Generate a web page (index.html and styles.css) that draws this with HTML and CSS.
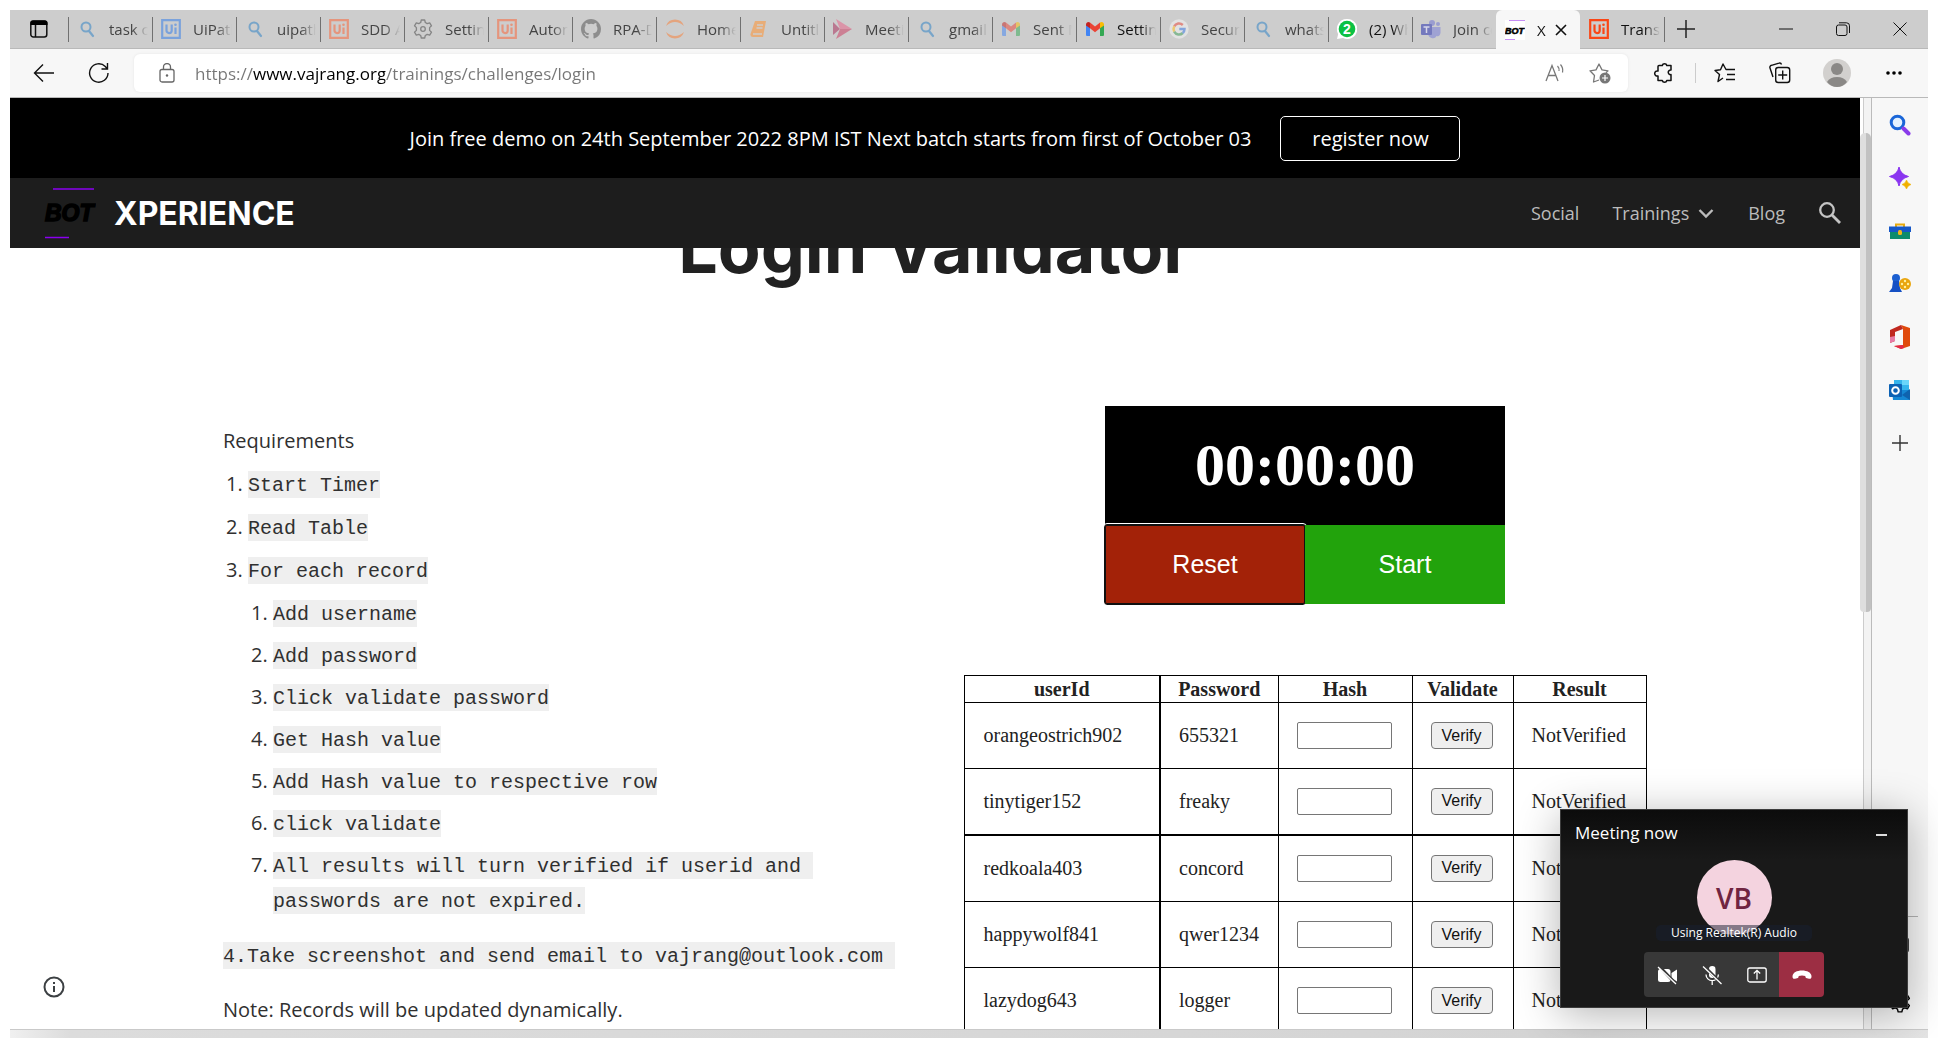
FILE: index.html
```html
<!DOCTYPE html>
<html lang="en">
<head>
<meta charset="utf-8">
<meta name="viewport" content="width=device-width, initial-scale=1">
<title>Xperience - Login Validator</title>
<link rel="stylesheet" href="styles.css">
</head>
<body>
<svg class="defs" aria-hidden="true">
  <symbol id="find" viewBox="0 0 20 20"><circle cx="9" cy="8" r="4.500" fill="none" stroke="currentColor" stroke-width="2"/><path d="M12 12l4 5" stroke="currentColor" stroke-width="2.200" stroke-linecap="round"/></symbol>
  <symbol id="uipath" viewBox="0 0 20 20"><path d="M1.200 1.200h17.600v17.600H1.200z" fill="none" stroke="currentColor" stroke-width="2.200"/><path d="M5.500 5.500v6a2.600 2.600 0 0 0 5.200 0v-6M14.500 8.500V15" fill="none" stroke="currentColor" stroke-width="2.200"/><circle cx="14.500" cy="5.800" r="1.300" fill="currentColor"/></symbol>
  <symbol id="gear" viewBox="0 0 20 20"><path d="M8.300 1h3.400l.6 2.500 1.900 1.100 2.500-.8 1.800 3-1.900 1.800v2.800l1.900 1.800-1.800 3-2.500-.8-1.900 1.100-.6 2.500H8.300l-.6-2.500-1.900-1.100-2.500.8-1.800-3 1.900-1.800V8.600L1.500 6.800l1.800-3 2.500.8 1.900-1.100z" fill="none" stroke="currentColor" stroke-width="1.300" stroke-linejoin="round"/><circle cx="10" cy="10" r="2.300" fill="none" stroke="currentColor" stroke-width="1.300"/></symbol>
  <symbol id="gmail" viewBox="0 0 20 20"><path d="M1 5v11a1 1 0 0 0 1 1h3V8z" fill="#4285f4"/><path d="M19 5v11a1 1 0 0 1-1 1h-3V8z" fill="#34a853"/><path d="M1 5.500C1 3 3.500 2.200 5 3.500v5.700L1 6.500z" fill="#c5221f"/><path d="M5 3.500l5 4 5-4v5.700l-5 4-5-4z" fill="#ea4335"/><path d="M19 5.500C19 3 16.500 2.200 15 3.500v5.700l4-2.700z" fill="#fbbc04"/></symbol>
</svg>

<header class="chrome">
  <div class="tabstrip">
    <button class="tab-menu" aria-label="Tab actions"><svg width="20" height="20" viewBox="0 0 20 20"><rect x="1.800" y="2" width="16" height="16" rx="2.500" fill="none" stroke="#111" stroke-width="1.500"/><path d="M1.500 6V4a2.500 2.500 0 0 1 2.500-2.500h12A2.500 2.500 0 0 1 18.500 4v2z"/><path d="M6.500 6v12" stroke="#111" stroke-width="1.500"/></svg></button>
    <nav class="tabs" aria-label="Open tabs">
      <button class="tab asleep"><svg class="blue"><use href="#find"/></svg><span>task ca</span></button>
      <button class="tab asleep"><svg class="uiblue"><use href="#uipath"/></svg><span>UiPath</span></button>
      <button class="tab asleep"><svg class="blue"><use href="#find"/></svg><span>uipath</span></button>
      <button class="tab asleep"><svg class="orange"><use href="#uipath"/></svg><span>SDD A</span></button>
      <button class="tab asleep"><svg class="grey"><use href="#gear"/></svg><span>Setting</span></button>
      <button class="tab asleep"><svg class="orange"><use href="#uipath"/></svg><span>Autom</span></button>
      <button class="tab asleep"><svg viewBox="0 0 16 16"><path fill="#8d8d8d" d="M8 0C3.580 0 0 3.580 0 8c0 3.540 2.290 6.530 5.470 7.590.4.070.55-.17.55-.38 0-.19-.01-.82-.01-1.490-2.010.37-2.530-.49-2.690-.94-.09-.23-.48-.94-.82-1.130-.28-.15-.68-.52-.01-.53.63-.01 1.080.58 1.230.82.72 1.210 1.870.87 2.330.66.07-.52.28-.87.51-1.070-1.780-.2-3.640-.89-3.640-3.950 0-.87.31-1.590.82-2.150-.08-.2-.36-1.020.08-2.120 0 0 .67-.21 2.200.82a7.600 7.600 0 0 1 4 0c1.530-1.040 2.200-.82 2.200-.82.44 1.100.16 1.920.08 2.120.51.56.82 1.270.82 2.150 0 3.070-1.870 3.750-3.650 3.950.29.25.54.73.54 1.480 0 1.070-.01 1.930-.01 2.200 0 .21.15.46.55.38A8 8 0 0 0 16 8c0-4.420-3.580-8-8-8z"/></svg><span>RPA-D</span></button>
      <button class="tab asleep"><svg viewBox="0 0 20 20"><path d="M1 7a9.500 9.500 0 0 1 18 0Q10-1 1 7zM1 13a9.500 9.500 0 0 0 18 0Q10 21 1 13z" fill="#e4a47e"/></svg><span>Home</span></button>
      <button class="tab asleep"><svg viewBox="0 0 20 20"><path d="M6 2h11l-3 16H4q-3 0-2.500-3z" fill="#e8ad78"/><path d="M8 6h6M7.500 9h6M4 15h9" stroke="#cdcdcd" stroke-width="1.300"/></svg><span>Untitle</span></button>
      <button class="tab asleep"><svg viewBox="0 0 20 20"><path d="M3 0l16 10H7z" fill="#db94a8"/><path d="M0 3l7 7-7 6z" fill="#ba7890"/><path d="M7 10h12L3 20z" fill="#cc8094"/></svg><span>Meetin</span></button>
      <button class="tab asleep"><svg class="blue"><use href="#find"/></svg><span>gmail l</span></button>
      <button class="tab asleep"><svg class="dim"><use href="#gmail"/></svg><span>Sent M</span></button>
      <button class="tab"><svg><use href="#gmail"/></svg><span>Setting</span></button>
      <button class="tab asleep"><svg viewBox="0 0 20 20"><circle cx="10" cy="10" r="9.700" fill="#e2e2e2"/><g fill="none" stroke-width="2.500"><path d="M5.200 7.400A5.500 5.500 0 0 1 13.800 6" stroke="#df8b84"/><path d="M5.200 12.600a5.500 5.500 0 0 1 0-5.200" stroke="#ecc871"/><path d="M5.200 12.600A5.500 5.500 0 0 0 13.800 14" stroke="#87b894"/><path d="M10.300 10h5.200a5.500 5.500 0 0 1-1.800 4.100" stroke="#84a5dd"/></g></svg><span>Securit</span></button>
      <button class="tab asleep"><svg class="blue"><use href="#find"/></svg><span>whatsa</span></button>
      <button class="tab"><svg viewBox="0 0 20 20"><path d="M10 0a10 10 0 1 1-4 19L0 20l1.200-5A10 10 0 0 1 10 0z" fill="#fff"/><circle cx="10" cy="10" r="8.300" fill="#0cc143"/><text x="10" y="15" text-anchor="middle" font-family="Liberation Sans" font-weight="700" font-size="14" fill="#fff">2</text></svg><span>(2) Wh</span></button>
      <button class="tab asleep"><svg viewBox="0 0 20 20"><circle cx="11" cy="4" r="3" fill="#9a9dd0"/><circle cx="17" cy="5" r="2" fill="#9a9dd0"/><path d="M7 8h12.500v6q-1 4-4 3-1.500 3-5 2Q7 18 7 14z" fill="#9fa2d3"/><rect y="5" width="11" height="11" rx="1" fill="#7479bd"/><path d="M2.500 8h6M5.500 8v6" stroke="#d6d7ea" stroke-width="1.500"/></svg><span>Join co</span></button>
      <button class="tab current" aria-current="page"><svg viewBox="0 0 20 20"><path fill="#fff" d="M0 0h20v20H0z"/><path d="M4 .5h16M0 19.500h10" stroke="#c58cf5"/><text x="0" y="13.500" font-family="Liberation Sans" font-size="9" font-weight="700" font-style="italic" stroke="#000" stroke-width=".6">BOT</text></svg><span>X</span><svg class="shut" viewBox="0 0 20 20"><path d="M5 5l10 10M15 5L5 15" stroke="#111" stroke-width="1.600"/></svg></button>
      <button class="tab"><svg class="uired"><use href="#uipath"/></svg><span>Transa</span></button>
    </nav>
    <button class="icon-btn new-tab" aria-label="New tab"><svg width="20" height="20" viewBox="0 0 20 20"><path d="M10 1v18M1 10h18" stroke="#222" stroke-width="1.500"/></svg></button>
    <div class="window-buttons">
      <button class="icon-btn" aria-label="Minimise"><svg width="14" height="14" viewBox="0 0 14 14"><path d="M0 7h14" stroke="#111"/></svg></button>
      <button class="icon-btn" aria-label="Restore"><svg width="14" height="14" viewBox="0 0 14 14"><rect x=".5" y="3" width="10.500" height="10.500" rx="2" fill="none" stroke="#111"/><path d="M3 .8h7.500a3 3 0 0 1 3 3V11" fill="none" stroke="#111"/></svg></button>
      <button class="icon-btn" aria-label="Close"><svg width="14" height="14" viewBox="0 0 14 14"><path d="M.5.5l13 13M13.500.5l-13 13" stroke="#111"/></svg></button>
    </div>
  </div>
  <div class="toolbar">
    <button class="icon-btn back" aria-label="Back"><svg width="22" height="20" viewBox="0 0 22 20"><path d="M21 10H1.500M10 1.500L1.500 10l8.500 8.500" fill="none" stroke="#111" stroke-width="1.400"/></svg></button>
    <button class="icon-btn reload" aria-label="Refresh"><svg width="22" height="22" viewBox="0 0 22 22"><path d="M20 11a9.200 9.200 0 1 1-2.700-6.500L19 6.500M19.500 1v6h-6" fill="none" stroke="#111" stroke-width="1.400"/></svg></button>
    <div class="address">
      <svg width="16" height="20" viewBox="0 0 16 20"><rect x="1" y="6.500" width="14" height="12.500" rx="2" fill="none" stroke="#666" stroke-width="1.300"/><path d="M4.500 6.500V4a3.500 3.500 0 0 1 7 0v2.500" fill="none" stroke="#666" stroke-width="1.300"/><circle cx="8" cy="12.500" r="1.200" fill="#666"/></svg>
      <input class="url" type="text" aria-label="Address" value="https://www.vajrang.org/trainings/challenges/login">
      <button class="icon-btn" aria-label="Read aloud"><svg width="20" height="20" viewBox="0 0 20 20"><path d="M1 18L7 2.500 13 18M3 12.500h8" fill="none" stroke="#777" stroke-width="1.300"/><path d="M12.500 3q2 2 1.500 5M15.500 1.500q3 3.500 2 8" fill="none" stroke="#777" stroke-width="1.200"/></svg></button>
      <button class="icon-btn" aria-label="Add to favourites"><svg width="22" height="22" viewBox="0 0 22 22"><path d="M10 18l-5.500 2 1-6.500L1 8.800l6-.9L10 2l3 5.900 6 .9-2 2" fill="none" stroke="#777" stroke-width="1.300" stroke-linejoin="round"/><circle cx="16" cy="16" r="5.500" fill="#777"/><path d="M16 13v6M13 16h6" stroke="#fff" stroke-width="1.200"/></svg></button>
    </div>
    <button class="icon-btn ext" aria-label="Extensions"><svg width="22" height="22" viewBox="0 0 22 22"><path d="M6 3.500h3.300a2.300 2.300 0 0 1 4.500 0H18v4.600a2.300 2.300 0 1 0 0 4.500v5.900h-4.200a2.300 2.300 0 0 1-4.500 0H5V14a2.600 2.600 0 1 1 0-5V4.500a1 1 0 0 1 1-1z" fill="none" stroke="#111" stroke-width="1.500" stroke-linejoin="round"/></svg></button>
    <span class="rule"></span>
    <button class="icon-btn favs" aria-label="Favourites"><svg width="22" height="22" viewBox="0 0 22 22"><path d="M9 16l-5 3.500 1.500-7L1 8.500l5.500-.7L9 2l3 5.500h9M13 12.500h8M12 17.500h9" fill="none" stroke="#111" stroke-width="1.400" stroke-linejoin="round"/></svg></button>
    <button class="icon-btn coll" aria-label="Collections"><svg width="22" height="22" viewBox="0 0 22 22"><path d="M4 15L1 6a2 2 0 0 1 1.500-2.700L10 1.200a2 2 0 0 1 2.500 1.300" fill="none" stroke="#111" stroke-width="1.400"/><rect x="6.700" y="5.500" width="14" height="15" rx="2.500" fill="none" stroke="#111" stroke-width="1.400"/><path d="M13.700 8.500v9M9.200 13h9" stroke="#111" stroke-width="1.400"/></svg></button>
    <button class="icon-btn me" aria-label="Profile"><svg width="28" height="28" viewBox="0 0 28 28"><circle cx="14" cy="14" r="14" fill="#d2d0ce"/><circle cx="14" cy="10" r="6" fill="#8a8886"/><path d="M4 23q3-5 10-5t10 5q-4 5-10 5T4 23z" fill="#8a8886"/></svg></button>
    <button class="icon-btn dots" aria-label="More"><svg width="18" height="6" viewBox="0 0 18 6"><circle cx="3" cy="3" r="1.800"/><circle cx="9" cy="3" r="1.800"/><circle cx="15" cy="3" r="1.800"/></svg></button>
  </div>
</header>

<div class="workspace">
  <div class="site">
    <div class="masthead">
      <div class="banner">
        <span>Join free demo on 24th September 2022 8PM IST Next batch starts from first of October 03</span>
        <a class="register" href="#register">register now</a>
      </div>
      <div class="nav">
        <a class="brand" href="#home">
          <svg width="52" height="52" viewBox="0 0 52 52"><path d="M9 2h41M1 50.500h24" stroke="#8a00f0" stroke-width="1.600"/><text x="1" y="34" font-family="Liberation Sans" font-size="23" font-weight="700" font-style="italic" stroke="#000" stroke-width="1.500">BOT</text></svg>
          <span>XPERIENCE</span>
        </a>
        <nav class="links" aria-label="Site">
          <a href="#social">Social</a>
          <a href="#trainings">Trainings <svg width="18" height="18" viewBox="0 0 18 18"><path d="M2.500 6L9 12.500 15.500 6" fill="none" stroke="#bbb" stroke-width="2.400"/></svg></a>
          <a href="#blog">Blog</a>
          <button class="icon-btn" aria-label="Search site"><svg width="24" height="24" viewBox="0 0 24 24"><circle cx="9" cy="9" r="6.800" fill="none" stroke="#c4c4c4" stroke-width="2.300"/><path d="M14 14l8 8" stroke="#c4c4c4" stroke-width="2.800"/></svg></button>
        </nav>
      </div>
    </div>

    <main>
      <h1>Login Validator</h1>
      <div class="columns">
        <section class="brief">
          <p>Requirements</p>
          <ol>
            <li><code>Start Timer</code></li>
            <li><code>Read Table</code></li>
            <li><code>For each record</code>
              <ol>
                <li><code>Add username</code></li>
                <li><code>Add password</code></li>
                <li><code>Click validate password</code></li>
                <li><code>Get Hash value</code></li>
                <li><code>Add Hash value to respective row</code></li>
                <li><code>click validate</code></li>
                <li><code>All results will turn verified if userid and&nbsp; passwords are not expired.</code></li>
              </ol>
            </li>
          </ol>
          <p class="spaced"><code>4.Take screenshot and send email to vajrang@outlook.com&nbsp;</code></p>
          <p class="spaced">Note: Records will be updated dynamically.</p>
        </section>
        <section class="challenge">
          <div class="timer">
            <div class="clock">00:00:00</div>
            <button class="reset">Reset</button><button class="start">Start</button>
          </div>
          <table>
            <thead><tr><th class="c-user">userId</th><th class="c-pass">Password</th><th class="c-hash">Hash</th><th class="c-val">Validate</th><th class="c-res">Result</th></tr></thead>
            <tbody>
              <tr><td>orangeostrich902</td><td>655321</td><td><input type="text" aria-label="Hash for orangeostrich902"></td><td><button>Verify</button></td><td>NotVerified</td></tr>
              <tr><td>tinytiger152</td><td>freaky</td><td><input type="text" aria-label="Hash for tinytiger152"></td><td><button>Verify</button></td><td>NotVerified</td></tr>
              <tr class="heavy"><td>redkoala403</td><td>concord</td><td><input type="text" aria-label="Hash for redkoala403"></td><td><button>Verify</button></td><td>NotVerified</td></tr>
              <tr><td>happywolf841</td><td>qwer1234</td><td><input type="text" aria-label="Hash for happywolf841"></td><td><button>Verify</button></td><td>NotVerified</td></tr>
              <tr><td>lazydog643</td><td>logger</td><td><input type="text" aria-label="Hash for lazydog643"></td><td><button>Verify</button></td><td>NotVerified</td></tr>
            </tbody>
          </table>
        </section>
      </div>
    </main>
    <button class="icon-btn info" aria-label="Page info"><svg width="22" height="22" viewBox="0 0 22 22"><circle cx="11" cy="11" r="9.500" fill="none" stroke="#3c4043" stroke-width="2"/><path d="M11 10v6M11 6v2" stroke="#3c4043" stroke-width="2"/></svg></button>
  </div>
  <div class="scroll"><div class="thumb"></div></div>
  <aside class="sidebar" aria-label="Sidebar">
    <div class="apps">
      <button class="icon-btn" aria-label="Search"><svg width="22" height="22" viewBox="0 0 22 22"><circle cx="8.500" cy="8.500" r="6.300" fill="#e3f1ff" stroke="#1a66d8" stroke-width="3"/><path d="M14.500 14.500l5 5" stroke="#8a3bea" stroke-width="4" stroke-linecap="round"/></svg></button>
      <button class="icon-btn" aria-label="Discover"><svg width="22" height="22" viewBox="0 0 22 22"><path d="M10 0q1.500 7.500 9.500 9.500-8 2-9.500 9.500-1.500-7.500-9.500-9.500Q8.500 7.500 10 0z" fill="#8a35f0" stroke="#8a35f0"/><path d="M17.500 13q1 3.500 4.500 4.500-3.500 1-4.500 4.500-1-3.500-4.500-4.500 3.500-1 4.500-4.500z" fill="#f0b000" stroke="#f0b000" stroke-width=".6"/></svg></button>
      <button class="icon-btn" aria-label="Tools"><svg width="22" height="22" viewBox="0 0 22 22"><path d="M7 7V4.500h8V7" fill="none" stroke="#e8a90c" stroke-width="2"/><path d="M1 10h20v9H1z" fill="#0c8c6c"/><path d="M0 6.500h22V12H0z" fill="#1557c8"/><rect x="9" y="10" width="4" height="5" rx="1.500" fill="#f2b51c"/></svg></button>
      <button class="icon-btn" aria-label="Games"><svg width="22" height="22" viewBox="0 0 22 22"><circle cx="7" cy="5" r="4" fill="#1c5fd0"/><path d="M4 8h6l1 7 2 4H0l3-4z" fill="#1550c4"/><circle cx="16" cy="11" r="6" fill="#e9a50e"/><g fill="#fff0a0"><circle cx="16" cy="8" r="1.200"/><circle cx="16" cy="14" r="1.200"/><circle cx="13" cy="11" r="1.200"/><circle cx="19" cy="11" r="1.200"/></g></svg></button>
      <button class="icon-btn" aria-label="Office"><svg width="22" height="24" viewBox="0 0 22 24"><path d="M12 0l9 3v18l-9 3-7-3 9-1V4z" fill="#e04a0c"/><path d="M12 0l2 4-8 3v9l-5 2V5z" fill="#c0281f"/><path d="M1 12l5-1v5l-5 2z" fill="#e87ba6"/><path d="M5 21l9-1 1 3-3 1z" fill="#e3284a"/></svg></button>
      <button class="icon-btn" aria-label="Outlook"><svg width="22" height="22" viewBox="0 0 22 22"><path d="M5 1h15v10H5z" fill="#35b4ec"/><path d="M13 1h7v5h-7z" fill="#6bd6fa"/><path d="M3 11h18v10H4z" fill="#1588d4"/><path d="M21 10v11l-8-5z" fill="#0f63ae"/><rect y="5" width="13" height="13" rx="1" fill="#0c62b4"/><circle cx="6.500" cy="11.500" r="3.300" fill="none" stroke="#fff" stroke-width="2"/></svg></button>
      <button class="icon-btn" aria-label="Add app"><svg width="16" height="16" viewBox="0 0 16 16"><path d="M8 0v16M0 8h16" stroke="#333" stroke-width="1.400"/></svg></button>
    </div>
    <div class="tools">
      <button class="icon-btn" aria-label="Hide sidebar"><svg width="20" height="20" viewBox="0 0 20 20"><rect x="1" y="3" width="17" height="14" rx="2" fill="none" stroke="#111" stroke-width="1.600"/></svg></button>
      <button class="icon-btn" aria-label="Settings"><svg width="22" height="22"><use href="#gear"/></svg></button>
    </div>
  </aside>
</div>
<footer class="edge"></footer>

<section class="meeting" aria-label="Meeting now">
  <div class="meeting-head"><span>Meeting now</span><button class="icon-btn" aria-label="Minimise call"><svg width="12" height="12" viewBox="0 0 12 12"><path d="M0 9h11" stroke="#ddd" stroke-width="2"/></svg></button></div>
  <div class="avatar">VB</div>
  <div class="device">Using Realtek(R) Audio</div>
  <div class="calls">
    <button aria-label="Turn camera on"><svg width="20" height="20" viewBox="0 0 20 20"><rect x="1" y="4" width="12.500" height="13" rx="2.500" fill="#fff"/><path d="M14.500 8L20 4.500v12L14.500 13z" fill="#fff"/><path d="M2 1l17 18" stroke="#383838" stroke-width="3"/><path d="M1 2l18 17" stroke="#fff" stroke-width="1.300"/></svg></button>
    <button aria-label="Unmute"><svg width="20" height="20" viewBox="0 0 20 20"><rect x="7" y="1" width="6.500" height="12" rx="3.200" fill="#fff"/><path d="M4 9.500a6.200 6.200 0 0 0 12.400 0M10.200 16v4" fill="none" stroke="#fff" stroke-width="1.300"/><path d="M2 1l17 17" stroke="#383838" stroke-width="3"/><path d="M1 1.500L19.500 19" stroke="#fff" stroke-width="1.300"/></svg></button>
    <button aria-label="Share screen"><svg width="20" height="20" viewBox="0 0 20 20"><rect x=".8" y="3" width="18.400" height="14" rx="2" fill="none" stroke="#fff" stroke-width="1.300"/><path d="M10 14.500v-9M6.800 8.500L10 5.300l3.200 3.200" fill="none" stroke="#fff" stroke-width="1.300"/></svg></button>
    <button class="hang" aria-label="Leave call"><svg width="20" height="20" viewBox="0 0 20 20"><path d="M10 5.500c5 0 9.500 2 9.500 6 0 2-1 2.500-2.500 2.200l-2-.4c-1.300-.3-1.700-1-1.700-2.300q-3.300-1.200-6.600 0c0 1.300-.4 2-1.700 2.300l-2 .4C1.500 14 .5 13.500.5 11.500c0-4 4.500-6 9.500-6z" fill="#fff"/></svg></button>
  </div>
</section>
</body>
</html>
```
FILE: styles.css
```css
* { box-sizing: border-box; }

body {
  position: relative;
  display: flex;
  flex-direction: column;
  height: 100vh;
  margin: 0;
  padding: 10px 10px 0;
  overflow: hidden;
  background: #fff;
  font-family: "Open Sans", sans-serif;
}

button { font-family: inherit; cursor: pointer; }
a { color: inherit; text-decoration: none; }
svg { flex: none; display: block; }
.defs { position: absolute; width: 0; height: 0; }

.icon-btn {
  display: grid;
  place-items: center;
  flex: none;
  margin: 0;
  padding: 0;
  border: 0;
  background: none;
}

/* Browser frame */
.tabstrip {
  display: flex;
  align-items: stretch;
  height: 39px;
  background: #cdcdcd;
  border-bottom: 1px solid #b9b9b9;
}
.tab-menu {
  display: grid;
  place-items: center;
  width: 58px;
  padding: 0;
  border: 0;
  background: none;
}
.tabs { display: flex; }
.tab {
  display: flex;
  align-items: center;
  gap: 12px;
  width: 84px;
  padding: 0 4px 0 9px;
  border: 0;
  background: linear-gradient(#707070, #707070) left center / 1px 25px no-repeat;
  color: #111;
  font-size: 15px;
  text-align: left;
}
.tab svg { width: 20px; height: 20px; }
.tab span {
  flex: 1;
  min-width: 0;
  overflow: hidden;
  white-space: nowrap;
  mask-image: linear-gradient(to right, #000 60%, transparent);
}
.tab.asleep { color: #444; }
.tab.current {
  height: 39px;
  padding-right: 0;
  background: #f7f7f7;
  border-radius: 6px 6px 0 0;
}
.tab.current + .tab { background: none; }
.tab.current span { flex: none; mask-image: linear-gradient(to right, #000 50%, #888); }
.tab.current .shut { margin-left: -7px; }
.blue { color: #78a5c9; }
.uiblue { color: #7aa2dc; }
.orange { color: #e5957d; }
.uired { color: #fa4616; }
.grey { color: #858585; }
.dim { opacity: .5; }
.new-tab { width: 44px; background: linear-gradient(#707070, #707070) left center / 1px 25px no-repeat; }
.window-buttons { display: flex; margin-left: auto; }
.window-buttons .icon-btn { width: 57px; }

.toolbar {
  display: flex;
  align-items: center;
  height: 49px;
  padding: 0 25px 0 23px;
  background: #f7f7f7;
  border-bottom: 1px solid #b9b9b9;
}
.reload { margin: 0 24px 0 33px; }
.address {
  display: flex;
  flex: 1;
  align-items: center;
  height: 38px;
  padding: 0 17px 0 25px;
  border-radius: 6px;
  background: #fff;
  box-shadow: 0 0 3px #e4e4e4;
}
.address .icon-btn + .icon-btn { margin-left: 24px; }
.url {
  flex: 1;
  min-width: 0;
  margin-left: 20px;
  padding: 0;
  border: 0;
  background: linear-gradient(to right, #767676 58px, #000 58px, #000 190px, #767676 190px);
  background-clip: text;
  color: transparent;
  font: 17px "Open Sans", sans-serif;
}
.ext { margin-left: 25px; }
.rule { width: 1px; height: 20px; margin: 0 18px 0 20px; background: #ccc; }
.coll { margin-left: 33px; }
.me { margin-left: 32px; }
.dots { margin-left: 34px; }

.workspace {
  display: flex;
  flex: 1;
  min-height: 0;
}

/* Website */
.site {
  position: relative;
  flex: 1;
  overflow: hidden;
  color: #303030;
  font-size: 20px;
}
.masthead { position: relative; z-index: 1; color: #fff; }
.banner {
  display: flex;
  align-items: center;
  justify-content: center;
  gap: 29px;
  height: 80px;
  background: #000;
}
.register {
  display: grid;
  place-items: center;
  width: 180px;
  height: 45px;
  border: 1px solid #fff;
  border-radius: 5px;
}
.nav {
  display: flex;
  align-items: center;
  justify-content: space-between;
  height: 70px;
  padding: 0 18px 0 34px;
  background: #1d1d1d;
}
.brand {
  display: flex;
  align-items: center;
  gap: 18px;
  font: 700 32px Inter, sans-serif;
}
.links {
  display: flex;
  align-items: center;
  gap: 33px;
  color: #bbb;
  font-size: 18px;
}
.links a { display: flex; align-items: center; gap: 8px; }

main {
  display: flex;
  flex-direction: column;
  align-items: center;
}
h1 {
  margin: -45px 0 0;
  color: #212121;
  font: 700 70px/90px Inter, sans-serif;
}
.columns {
  display: grid;
  grid-template-columns: 1fr 1fr;
  width: 80%;
  margin-top: 113px;
}
.brief { padding: 17px 28px 0; line-height: 35px; }
.brief p { margin: 0; }
.brief .spaced { margin-top: 20px; }
.brief ol { margin: 0; padding-left: 25px; }
.brief li { margin-top: 8px; }
.brief li li + li { margin-top: 7px; }
.brief code {
  padding: 3px 0 1px;
  background: #efefef;
  font: 20px "Liberation Mono", monospace;
}

.challenge {
  display: flex;
  flex-direction: column;
  align-items: center;
}
.timer {
  display: grid;
  grid-template-columns: 1fr 1fr;
  width: 400px;
}
.clock {
  display: grid;
  grid-column: 1 / -1;
  place-items: center;
  height: 119px;
  background: #000;
  color: #fff;
  font: 700 60px "Liberation Serif", serif;
}
.timer button {
  height: 79px;
  border: 0;
  color: #fff;
  font: 25px "Liberation Sans", sans-serif;
}
.reset {
  border-radius: 2px;
  outline: 1px solid #fff;
  outline-offset: 1px;
  background: #a32208;
  box-shadow: 0 0 0 1px #101010, inset 0 0 0 1px #101010;
}
.start { position: relative; background: #22a30c; }
table {
  margin-top: 71px;
  border-collapse: collapse;
  color: #222;
  font: 20px "Liberation Serif", serif;
}
th, td { border: 1px solid #000; text-align: left; }
th { height: 27px; padding: 0; text-align: center; }
td { height: 66px; padding: 0 18px; }
.c-user { width: 196px; }
.c-pass { width: 118px; }
.c-hash { width: 134px; }
.c-val { width: 101px; }
.c-res { width: 133px; }
th:first-child, td:first-child { border-right-width: 2px; }
td:first-child { padding-left: 19px; }
.heavy td { height: 67px; border-top-width: 2px; }
td input {
  display: block;
  width: 95px;
  height: 27px;
  border: 1px solid #767676;
  border-radius: 2px;
}
td button {
  display: block;
  width: 62px;
  height: 27px;
  padding: 0;
  border: 1px solid #767676;
  border-radius: 4px;
  background: #efefef;
  color: #111;
  font: 16px "Liberation Sans", sans-serif;
}
.info { position: absolute; left: 33px; bottom: 31px; }

.scroll {
  width: 12px;
  padding-top: 35px;
  border-right: 1px solid #bbb;
  background: linear-gradient(to right, #fff 3px, #ccc 3px, #ccc 4px, #f3f3f3 4px);
}
.thumb {
  height: 479px;
  border-radius: 5px 5px 4px 4px;
  background: linear-gradient(to right, #dedede 6px, #c1c1c1 6px);
}
.sidebar {
  display: flex;
  flex-direction: column;
  justify-content: space-between;
  width: 56px;
  background: #f7f7f7;
}
.apps { display: flex; flex-direction: column; }
.apps .icon-btn { height: 53px; }
.tools {
  display: flex;
  flex-direction: column;
  align-items: center;
  gap: 36px;
  margin: 0 10px;
  padding: 18px 0 16px;
  border-top: 1px solid #b4b4b4;
}
.edge {
  flex: none;
  height: 9px;
  border-top: 1px solid #c9c9c9;
  background: linear-gradient(to right, #f0f0f0, #dcdcdc 60px, #d4d4d4 80%, #e4e4e4);
}

/* Floating call window */
.meeting {
  position: absolute;
  right: 30px;
  bottom: 30px;
  z-index: 2;
  display: flex;
  flex-direction: column;
  align-items: center;
  width: 348px;
  height: 199px;
  border: 1px solid #3c3c3c;
  background: linear-gradient(#0c0c0c, #191919 50px);
  box-shadow: 0 6px 40px rgb(0 0 0 / 30%);
  color: #fff;
}
.meeting-head {
  display: flex;
  align-items: center;
  justify-content: space-between;
  width: 100%;
  height: 44px;
  padding: 0 19px 0 14px;
  font-size: 17px;
}
.avatar {
  display: grid;
  place-items: center;
  width: 75px;
  height: 75px;
  margin-top: 6px;
  border-radius: 50%;
  background: #f4d3df;
  color: #702441;
  font-size: 28px;
  font-weight: 600;
}
.device {
  width: 156px;
  margin-top: -10px;
  border-radius: 5px;
  background: rgb(24 31 50 / 50%);
  font-size: 12px;
  line-height: 16px;
  text-align: center;
}
.calls {
  display: flex;
  margin-top: 11px;
  overflow: hidden;
  border-radius: 4px;
}
.calls button {
  display: grid;
  place-items: center;
  width: 45px;
  height: 45px;
  padding: 0;
  border: 0;
  background: #383838;
}
.calls .hang { background: #9c2e43; }
```
